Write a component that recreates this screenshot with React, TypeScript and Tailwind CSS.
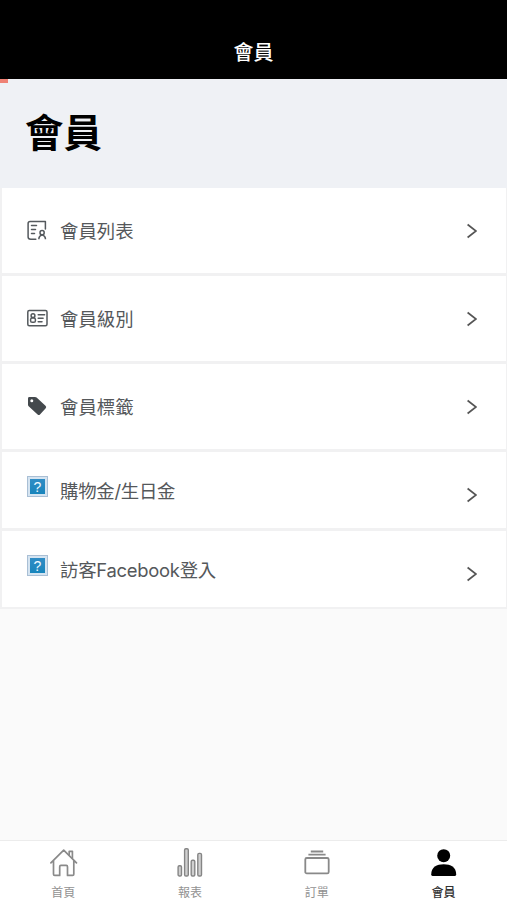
/**
 * 會員頁面
 * 頂部標題、會員選單列表、底部導覽列
 */
import type { ReactNode } from 'react';
import clsx from 'clsx';

function ListIcon() {
  return (
    <svg className="block h-[21px] w-[21px]" viewBox="0 0 21 21" fill="none" stroke="#54595d" strokeWidth={1.5}>
      <path d="M8.8 19.2H3.7Q1.1 19.2 1.1 17V3.6Q1.1 1.6 3.1 1.6H18.4V9" strokeLinecap="round" strokeLinejoin="round" />
      <path d="M4.5 5.4H9.5M4.5 9.4H8.5M4.5 13.4H7.5" strokeLinecap="round" />
      <circle cx="15.1" cy="12.7" r="2.1" />
      <path d="M11.9 19.3V18.6Q11.9 16.2 15.1 14.9Q18.4 16.2 18.4 18.6V19.3" />
    </svg>
  );
}

function CardIcon() {
  return (
    <svg className="block h-[21px] w-[21px]" viewBox="0 0 21 21" fill="none" stroke="#54595d" strokeWidth={1.5}>
      <rect x="0.8" y="2.6" width="19.2" height="15.2" rx="1.5" />
      <circle cx="6" cy="7.7" r="1.9" />
      <rect x="3.6" y="9.9" width="4.8" height="4.4" rx="1.6" />
      <path d="M11.2 6.7H17.6M11.2 10.2H16.1M11.2 13.7H15" strokeLinecap="round" />
    </svg>
  );
}

function TagIcon() {
  return (
    <svg className="block h-[21px] w-[21px]" viewBox="0 0 21 21" fill="#44494d">
      <path
        fillRule="evenodd"
        d="M2.4 1H8Q8.9 1 9.6 1.6L18.5 9.7Q19.9 10.9 18.7 12.2L13 18.4Q11.9 19.5 10.6 18.4L1.9 10.6Q1 9.8 1 8.7V2.4Q1 1 2.4 1ZM4.8 3.3A1.5 1.5 0 1 0 4.8 6.3A1.5 1.5 0 1 0 4.8 3.3Z"
      />
    </svg>
  );
}

// 圖片缺失時的問號圖示
function UnknownIcon() {
  return (
    <div className="flex h-[21px] w-[21px] items-center justify-center border border-[#a9bfd5] bg-[#d5e4f1]">
      <div className="flex h-[15px] w-[15px] items-center justify-center bg-linear-to-b from-[#308dc5] to-[#1785bc] font-['Liberation_Sans',sans-serif] text-[14px] leading-none text-[#f0faff]">
        ?
      </div>
    </div>
  );
}

function Chevron() {
  return (
    <svg className="block h-4 w-3" viewBox="0 0 12 16" fill="none" stroke="#555" strokeWidth={1.7}>
      <path d="M2.6 1.5L11 8L2.6 14.5" />
    </svg>
  );
}

function HomeIcon() {
  return (
    <svg className="block h-8 w-8" viewBox="0 0 32 32" fill="none" stroke="#8a8a8a" strokeWidth={1.7} strokeLinejoin="round">
      <path d="M3.9 16.8L16.7 4.2L29.5 16.8M6.5 14.6V28.2Q6.5 29.4 7.7 29.4H12.7V20.8Q12.7 19.4 13.9 19.4H19.3Q20.5 19.4 20.5 20.8V29.4H25.6Q26.8 29.4 26.8 28.2V14.6" strokeLinecap="round" />
      <path d="M22.2 9.2V5.3H25.4V12.4" />
    </svg>
  );
}

function ReportIcon() {
  return (
    <svg className="block h-8 w-8" viewBox="0 0 32 32" fill="#d0d0d0" stroke="#858585" strokeWidth={1.4}>
      <rect x="4.1" y="19.7" width="3.4" height="10.3" rx="1.3" />
      <rect x="10.6" y="2.8" width="3.7" height="27.2" rx="1.3" />
      <rect x="17.2" y="14.2" width="3.6" height="15.8" rx="1.3" />
      <rect x="23.8" y="7.4" width="3.7" height="22.6" rx="1.3" />
    </svg>
  );
}

function OrderIcon() {
  return (
    <svg className="block h-8 w-8" viewBox="0 0 32 32" fill="none" stroke="#898989" strokeWidth={1.8}>
      <path d="M9.8 5.5H22.2M7.4 8.7H24.6" />
      <rect x="4.3" y="12" width="23.4" height="15.4" rx="1.5" />
    </svg>
  );
}

function MemberIcon() {
  return (
    <svg className="block h-8 w-8" viewBox="0 0 32 32" fill="#000">
      <circle cx="15.7" cy="9.7" r="6.5" />
      <path d="M3.2 28.5C3.2 20.9 8.7 18.2 15.7 18.2S28.2 20.9 28.2 28.5Q28.2 29.9 26.9 29.9H4.5Q3.2 29.9 3.2 28.5Z" />
    </svg>
  );
}

type MenuItem = { label: string; icon: ReactNode; missing?: boolean };

const menuItems: MenuItem[] = [
  { label: '會員列表', icon: <ListIcon /> },
  { label: '會員級別', icon: <CardIcon /> },
  { label: '會員標籤', icon: <TagIcon /> },
  { label: '購物金/生日金', icon: <UnknownIcon />, missing: true },
  { label: '訪客Facebook登入', icon: <UnknownIcon />, missing: true },
];

const tabs = [
  { label: '首頁', icon: <HomeIcon /> },
  { label: '報表', icon: <ReportIcon /> },
  { label: '訂單', icon: <OrderIcon /> },
  { label: '會員', icon: <MemberIcon />, active: true },
];

function MenuRow({ label, icon, missing }: MenuItem) {
  return (
    <button
      className={clsx(
        'flex w-full bg-white pr-[29px] pl-[25px] text-left',
        missing ? 'h-[76px] pt-[24px]' : 'h-[85px] pt-[32px]',
      )}
    >
      {icon}
      <span
        className={clsx(
          'ml-3 flex-1 text-[18.4px] leading-6 text-[#55585b]',
          missing ? 'mt-[3px] tracking-[-0.25px]' : '-mt-px',
        )}
      >
        {label}
      </span>
      <span className={missing ? 'mt-[11px]' : 'mt-[3px]'}>
        <Chevron />
      </span>
    </button>
  );
}

export default function App() {
  return (
    <div className="flex h-[900px] w-full flex-col overflow-hidden bg-[#fafafa] font-[Inter,'Noto_Sans_CJK_TC',sans-serif]">
      {/* 頂部標題列 */}
      <header className="flex h-[79px] shrink-0 justify-center bg-black pt-[38px] text-[20px] leading-[30px] font-medium text-white">
        會員
      </header>

      <div className="h-[109px] shrink-0 bg-[#eff1f5]">
        {/* 載入進度 */}
        <div className="h-1 w-2 bg-[#ef8275]" />
        <h1 className="pt-[22px] pl-[25px] text-[38.4px] leading-[56px] font-bold text-black">會員</h1>
      </div>

      {/* 選單列表 */}
      <main className="flex flex-col gap-[3px] border-r border-b-2 border-l-2 border-[#f1f1f2] bg-[#f1f1f2]">
        {menuItems.map((item) => (
          <MenuRow key={item.label} {...item} />
        ))}
      </main>

      {/* 底部導覽 */}
      <nav className="mt-auto grid h-[60px] shrink-0 grid-cols-4 border-t border-[#ececec] bg-white">
        {tabs.map((tab) => (
          <button key={tab.label} className="flex flex-col items-center pt-[5px]">
            {tab.icon}
            <span className={clsx('mt-[6px] text-[12px] leading-[18px]', tab.active ? 'font-medium text-[#333]' : 'text-[#929292]')}>
              {tab.label}
            </span>
          </button>
        ))}
      </nav>
    </div>
  );
}
